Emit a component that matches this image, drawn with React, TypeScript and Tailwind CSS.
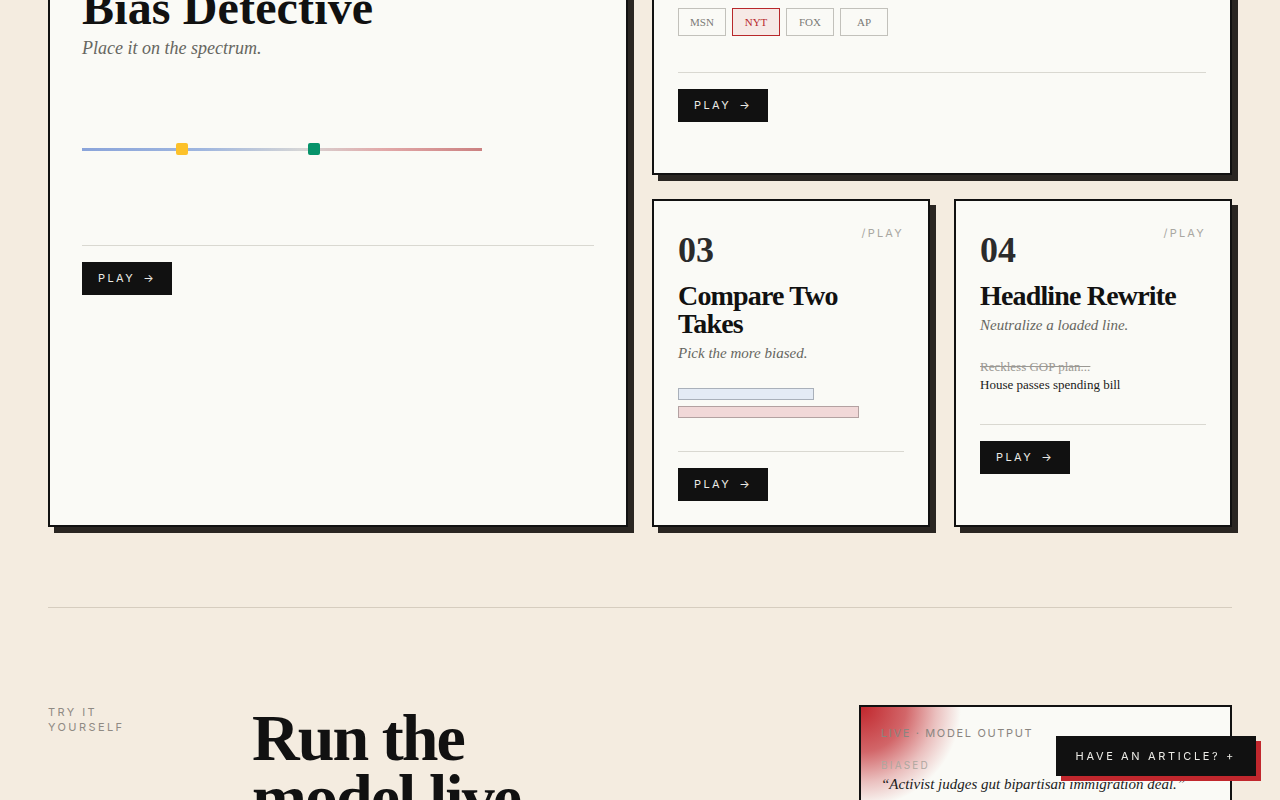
import React from "react";

const serif = "font-['Liberation_Serif','Times_New_Roman',serif]";
const sans = "font-['Inter','Liberation_Sans',sans-serif]";

function PlayButton() {
  return (
    <button
      className={`${sans} flex h-[33px] w-[90px] items-center gap-2 bg-[#111111] pl-4 text-[11px] uppercase tracking-[0.22em] text-[#ecebe6]`}
    >
      <span>Play</span>
      <span className="text-[11px] tracking-normal">→</span>
    </button>
  );
}

function Header({ n }: { n: string }) {
  return (
    <div className="flex items-start justify-between">
      <div className={`${serif} mt-[7px] text-[36px] font-bold leading-[36px] text-[#2b2b2b]`}>{n}</div>
      <div className={`${sans} text-[11px] leading-4 tracking-[0.2em] text-[#a9a7a1]`}>/PLAY</div>
    </div>
  );
}

function Footer({ mt }: { mt: string }) {
  return (
    <div className={`${mt} border-t border-[#d9d8d1] pt-4`}>
      <PlayButton />
    </div>
  );
}

const card = "border-2 border-[#111111] bg-[#fafaf6] shadow-[6px_6px_0_#2a2622]";

export default function App() {
  return (
    <div className="min-h-screen bg-[#f4ece0]">
      <div className="mt-[-153px] px-12 pb-40">
        <div className="grid grid-cols-2 gap-6">
          {/* Card 01 */}
          <div className={`${card} px-8 pt-8`}>
            <div className="flex items-start justify-between">
              <div className={`${serif} mt-[7px] text-[36px] font-bold leading-[36px] text-[#2b2b2b]`}>01</div>
              <div className={`${sans} text-[11px] leading-4 tracking-[0.2em] text-[#a9a7a1]`}>/PLAY</div>
            </div>
            <h2 className={`${serif} mt-[60px] text-[48px] font-bold leading-[48px] tracking-[0.003em] text-[#111111]`}>
              Bias Detective
            </h2>
            <p className={`${serif} mt-[3px] text-[18px] italic leading-[26px] text-[#666660]`}>Place it on the spectrum.</p>
            <div className="relative mt-[82px] h-[12px] w-[400px]">
              <div className="absolute left-0 right-0 top-[5px] h-[2.5px] bg-[linear-gradient(to_right,#8aa4da,#9fb6df_30%,#d6d6d6_55%,#e2a9a9_75%,#cb8181)]" />
              <div className="absolute left-[94px] top-0 h-3 w-3 rounded-[2px] bg-[#fcc12a]" />
              <div className="absolute left-[226px] top-0 h-3 w-3 rounded-[2px] bg-[#06936a]" />
            </div>
            <Footer mt="mt-[90px]" />
          </div>

          {/* Right column */}
          <div className="flex flex-col gap-6">
            <div className={`${card} px-6 pt-6 pb-[51px]`}>
              <Header n="02" />
              <h2 className={`${serif} mt-[14px] text-[28px] font-bold leading-[28px] tracking-[-0.03em] text-[#111111]`}>
                Spot the Source
              </h2>
              <p className={`${serif} mt-[4px] text-[15px] italic leading-[22px] text-[#666660]`}>Who wrote this headline?</p>
              <div className="mt-6 flex gap-1.5">
                {["MSN", "NYT", "FOX", "AP"].map((s) => (
                  <div
                    key={s}
                    className={`${serif} flex h-7 w-12 items-center justify-center border text-[11px] ${
                      s === "NYT"
                        ? "border-[#b8282b] bg-[#f6e9e6] text-[#b8282b]"
                        : "border-[#c2c1bb] text-[#7a7a76]"
                    }`}
                  >
                    {s}
                  </div>
                ))}
              </div>
              <Footer mt="mt-9" />
            </div>

            <div className="grid grid-cols-2 gap-6">
              {/* Card 03 */}
              <div className={`${card} px-6 pt-6 pb-6`}>
                <Header n="03" />
                <h2 className={`${serif} mt-[14px] text-[28px] font-bold leading-[28px] tracking-[-0.03em] text-[#111111]`}>
                  Compare Two
                  <br />
                  Takes
                </h2>
                <p className={`${serif} mt-[4px] text-[15px] italic leading-[22px] text-[#666660]`}>Pick the more biased.</p>
                <div className="mt-6 flex flex-col gap-1.5">
                  <div className="h-3 w-[136px] border border-[#a9b0ba] bg-[#e4ebf5]" />
                  <div className="h-3 w-[181px] border border-[#b3a1a1] bg-[#f1d8d8]" />
                </div>
                <Footer mt="mt-[33px]" />
              </div>

              {/* Card 04 */}
              <div className={`${card} px-6 pt-6 pb-6`}>
                <Header n="04" />
                <h2 className={`${serif} mt-[14px] text-[28px] font-bold leading-[28px] tracking-[-0.03em] text-[#111111]`}>
                  Headline Rewrite
                </h2>
                <p className={`${serif} mt-[4px] text-[15px] italic leading-[22px] text-[#666660]`}>Neutralize a loaded line.</p>
                <div className={`${serif} mt-[22px] text-[13px] leading-[18px]`}>
                  <div className="text-[#9a9893] line-through">Reckless GOP plan...</div>
                  <div className="text-[#1a1a1a]">House passes spending bill</div>
                </div>
                <Footer mt="mt-[30px]" />
              </div>
            </div>
          </div>
        </div>

        {/* Try it yourself */}
        <div className="mt-[80px] border-t border-[#d6cdbf] pt-[97px]">
          <div className="grid grid-cols-[204px_1fr_373px] items-start">
            <div className={`${sans} max-w-[100px] text-[11px] uppercase leading-[15px] tracking-[0.22em] text-[#8f8a83]`}>
              Try it yourself
            </div>
            <h2 className={`${serif} mt-[3px] text-[66px] font-bold leading-[60px] tracking-[-0.03em] text-[#111111]`}>
              Run the
              <br />
              model live
            </h2>
            <div className="h-[260px] border-2 border-[#111111] bg-[#fafaf6] bg-[radial-gradient(circle_at_0_0,#c1272d_0px,rgba(193,39,45,0.7)_45px,rgba(193,39,45,0.28)_75px,rgba(250,250,246,0)_100px)] px-5 pt-[18px]">
              <div className={`${sans} text-[11px] uppercase leading-4 tracking-[0.15em] text-[#8a8580]`}>Live · Model output</div>
              <div className={`${sans} mt-[17px] text-[10px] uppercase leading-[14px] tracking-[0.22em] text-[#aea79f]`}>Biased</div>
              <p className={`${serif} text-[15px] italic leading-[24px] text-[#1c1c1c]`}>
                “Activist judges gut bipartisan immigration deal.”
              </p>
            </div>
          </div>
        </div>
      </div>

      <button
        className={`${sans} fixed bottom-6 right-6 flex h-10 items-center bg-[#111111] pl-5 pr-[20px] text-[11px] uppercase tracking-[0.24em] text-[#ecebe6] shadow-[5px_5px_0_#c1272d]`}
      >
        Have an article? +
      </button>
    </div>
  );
}
